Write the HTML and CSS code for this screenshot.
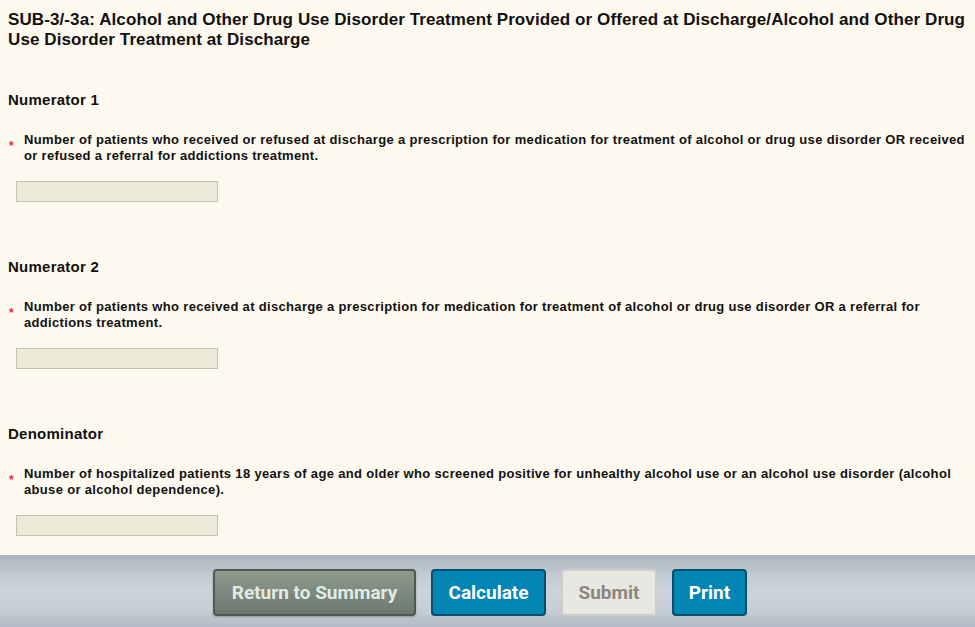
FILE: index.html
```html
<!DOCTYPE html>
<html>
<head>
<meta charset="utf-8">
<link rel="stylesheet" href="styles.css">
</head>
<body>
<div class="page">
  <main class="content">
    <h1 class="title">SUB-3/-3a: Alcohol and Other Drug Use Disorder Treatment Provided or Offered at Discharge/Alcohol and Other Drug Use Disorder Treatment at Discharge</h1>

    <section class="section">
      <h2 class="section-title">Numerator 1</h2>
      <div class="question">
        <span class="req">*</span>
        <label class="q-text">Number of patients who received or refused at discharge a prescription for medication for treatment of alcohol or drug use disorder OR received or refused a referral for addictions treatment.</label>
      </div>
      <input class="field" type="text">
    </section>

    <section class="section">
      <h2 class="section-title">Numerator 2</h2>
      <div class="question">
        <span class="req">*</span>
        <label class="q-text">Number of patients who received at discharge a prescription for medication for treatment of alcohol or drug use disorder OR a referral for addictions treatment.</label>
      </div>
      <input class="field" type="text">
    </section>

    <section class="section">
      <h2 class="section-title">Denominator</h2>
      <div class="question">
        <span class="req">*</span>
        <label class="q-text">Number of hospitalized patients 18 years of age and older who screened positive for unhealthy alcohol use or an alcohol use disorder (alcohol abuse or alcohol dependence).</label>
      </div>
      <input class="field" type="text">
    </section>
  </main>

  <footer class="footer">
    <button class="btn btn-gray">Return to Summary</button>
    <button class="btn btn-blue btn-calc">Calculate</button>
    <button class="btn btn-disabled">Submit</button>
    <button class="btn btn-blue btn-print">Print</button>
  </footer>
</div>
</body>
</html>
```

FILE: styles.css
```css
html, body {
  margin: 0;
  padding: 0;
  background: #fef9ee;
}
body {
  font-family: "Liberation Sans", Arial, sans-serif;
  color: #111;
  width: 975px;
  height: 627px;
  overflow: hidden;
}
.page {
  display: flex;
  flex-direction: column;
  height: 627px;
}
.content {
  flex: 1;
  padding: 10px 8px 0 8px;
  overflow: hidden;
}
.title {
  margin: 0;
  font-size: 17px;
  line-height: 20px;
  font-weight: bold;
  letter-spacing: 0.1px;
  color: #111;
}
.section {
  margin-top: 55px;
}
.section:first-of-type {
  margin-top: 40px;
}
.section-title {
  margin: 0;
  font-size: 15px;
  line-height: 20px;
  font-weight: bold;
  letter-spacing: 0.25px;
}
.question {
  display: flex;
  margin-top: 22px;
}
.req {
  color: #e8283c;
  font-size: 12px;
  font-weight: bold;
  width: 16px;
  flex: none;
  padding: 6px 0 0 1px;
  box-sizing: border-box;
  line-height: 16px;
}
.q-text {
  font-size: 13px;
  line-height: 16px;
  font-weight: bold;
  letter-spacing: 0.33px;
  padding-right: 2px;
}
.field {
  display: block;
  margin: 17px 0 0 8px;
  width: 202px;
  height: 21px;
  box-sizing: border-box;
  background: #ebe9d8;
  border: 1px solid #c4c2b0;
  padding: 0;
}
.footer {
  height: 72px;
  flex: none;
  background: linear-gradient(to bottom, #a9b5bf 0%, #c4ccd4 30%, #ccd3da 50%, #c7ced6 75%, #b1bcc6 100%);
  display: flex;
  justify-content: center;
  align-items: flex-start;
  gap: 15px;
  padding: 14px 15px 0 0;
  box-sizing: border-box;
}
.btn {
  height: 47px;
  border-radius: 4px;
  font-family: Roboto, "Liberation Sans", sans-serif;
  font-weight: bold;
  font-size: 19px;
  padding: 0;
  box-sizing: border-box;
}
.btn-gray {
  width: 203px;
  background: linear-gradient(to bottom, #8c9b8e, #6e786f);
  border: 2px solid #4f5952;
  color: #e0ebe4;
  box-shadow: 0 1px 2px rgba(0,0,0,0.25);
}
.btn-blue {
  background: #0085b5;
  border: 2px solid #0a4d6b;
  color: #fff;
}
.btn-calc { width: 115px; }
.btn-print { width: 75px; }
.btn-disabled {
  width: 96px;
  background: #e8e7e1;
  border: 2px solid #cfcec6;
  color: #8a877f;
}
```
